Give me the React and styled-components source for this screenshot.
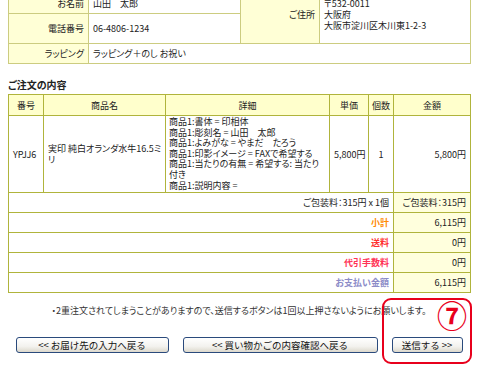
import React from "react";
import styled, { createGlobalStyle } from "styled-components";

const GlobalStyle = createGlobalStyle`
  html, body { margin: 0; padding: 0; background: #fff; }
  body {
    font-family: "Noto Sans CJK JP", "Noto Sans", sans-serif;
    font-size: 9px;
    color: #222;
    font-feature-settings: "palt";
  }
`;

const Page = styled.div`
  position: relative;
  width: 481px;
  height: 373px;
  overflow: hidden;
  padding-left: 8px;
  box-sizing: border-box;
`;

const InfoTable = styled.table`
  width: 462px;
  margin-top: -15px;
  border-collapse: collapse;
  table-layout: fixed;
  & td {
    border: 1px solid #cccc80;
    padding: 0 4px;
    line-height: 11px;
    white-space: nowrap;
  }
`;

const InfoRow = styled.tr`
  height: ${(p) => p.$h}px;
`;

const InfoLabel = styled.td`
  background: #ffffd6;
  text-align: right;
  vertical-align: ${(p) => p.$valign || "middle"};
  padding-bottom: ${(p) => p.$pb || 0}px !important;
`;

const InfoValue = styled.td`
  background: #fff;
  text-align: left;
  vertical-align: ${(p) => p.$valign || "middle"};
  padding-bottom: ${(p) => p.$pb || 0}px !important;
`;

const Heading = styled.h3`
  margin: 14px 0 2px;
  font-size: 10px;
  line-height: 14px;
  font-weight: bold;
  color: #222;
`;

const OrderTable = styled.table`
  width: 462px;
  border-collapse: collapse;
  table-layout: fixed;
  & th, & td {
    border: 1px solid #b0b43c;
    padding: 0 4px;
    line-height: 11px;
  }
`;

const HeadCell = styled.th`
  background: #ffffcc;
  font-weight: normal;
  text-align: center;
  white-space: nowrap;
  height: 20px;
  padding: 0 !important;
`;

const Cell = styled.td`
  text-align: ${(p) => p.$align || "left"};
  vertical-align: ${(p) => p.$valign || "middle"};
  white-space: nowrap;
`;

const DetailCell = styled.td`
  vertical-align: top;
  white-space: nowrap;
  padding: 1px 3px 0 !important;
  line-height: 10.6px !important;
`;

const SumRow = styled.tr`
  height: 20px;
`;

const SumLabel = styled.td`
  text-align: right;
  font-weight: ${(p) => (p.$color ? "bold" : "normal")};
  color: ${(p) => p.$color || "#222"};
  white-space: nowrap;
`;

const SumValue = styled.td`
  background: #ffffdd;
  text-align: right;
  white-space: nowrap;
`;

const Note = styled.p`
  width: 462px;
  margin: 11px 0 0;
  text-align: center;
  line-height: 14px;
  color: #333;
`;

const ButtonRow = styled.div`
  width: 462px;
  margin-top: 19px;
  display: flex;
  justify-content: center;
  gap: 14px;
`;

const XpButton = styled.button`
  width: ${(p) => p.$w}px;
  height: 16px;
  padding: 0;
  border: 1px solid #2a4a7c;
  border-radius: 3px;
  background: linear-gradient(#ffffff, #f3f2ee 60%, #dcd8cc);
  font-family: "Noto Sans CJK JP", "Noto Sans", sans-serif;
  font-size: 9.5px;
  font-feature-settings: normal;
  color: #111;
  line-height: 14px;
  white-space: nowrap;
`;

const Callout = styled.div`
  position: absolute;
  left: 382px;
  top: 298px;
  width: 90px;
  height: 66px;
  box-sizing: border-box;
  border: 2px solid #e8001c;
  border-radius: 9px;
`;

const CalloutNum = styled.span`
  position: absolute;
  left: 53px;
  top: -2px;
  font-size: 30px;
  line-height: 32px;
  font-weight: bold;
  color: #e8001c;
  font-feature-settings: normal;
`;

const details = [
  "商品1:書体 = 印相体",
  "商品1:彫刻名 = 山田　太郎",
  "商品1:よみがな = やまだ　たろう",
  "商品1:印影イメージ = FAXで希望する",
  "商品1:当たりの有無 = 希望する: 当たり",
  "付き",
  "商品1:説明内容 =",
];

const sums = [
  { label: "ご包装料：315円 x 1個", value: "ご包装料：315円" },
  { label: "小計", value: "6,115円", color: "#ff8a00" },
  { label: "送料", value: "0円", color: "#ff3030" },
  { label: "代引手数料", value: "0円", color: "#ff3355" },
  { label: "お支払い金額", value: "6,115円", color: "#8c8cc8" },
];

export default function App() {
  return (
    <>
      <GlobalStyle />
      <Page>
        <InfoTable>
          <colgroup>
            <col style={{ width: 80 }} />
            <col style={{ width: 152 }} />
            <col style={{ width: 79 }} />
            <col style={{ width: 151 }} />
          </colgroup>
          <tbody>
            <InfoRow $h={28}>
              <InfoLabel $valign="bottom" $pb={4}>お名前</InfoLabel>
              <InfoValue $valign="bottom" $pb={4}>山田　太郎</InfoValue>
              <InfoLabel rowSpan={2}>ご住所</InfoLabel>
              <InfoValue rowSpan={2}>
                〒532-0011
                <br />
                大阪府
                <br />
                大阪市淀川区木川東1-2-3
              </InfoValue>
            </InfoRow>
            <InfoRow $h={30}>
              <InfoLabel>電話番号</InfoLabel>
              <InfoValue>06-4806-1234</InfoValue>
            </InfoRow>
            <InfoRow $h={20}>
              <InfoLabel>ラッピング</InfoLabel>
              <InfoValue colSpan={3}>ラッピング＋のし お祝い</InfoValue>
            </InfoRow>
          </tbody>
        </InfoTable>

        <Heading>ご注文の内容</Heading>

        <OrderTable>
          <colgroup>
            <col style={{ width: 35 }} />
            <col style={{ width: 122 }} />
            <col style={{ width: 164 }} />
            <col style={{ width: 39 }} />
            <col style={{ width: 25 }} />
            <col style={{ width: 77 }} />
          </colgroup>
          <thead>
            <tr>
              <HeadCell>番号</HeadCell>
              <HeadCell>商品名</HeadCell>
              <HeadCell>詳細</HeadCell>
              <HeadCell>単価</HeadCell>
              <HeadCell>個数</HeadCell>
              <HeadCell>金額</HeadCell>
            </tr>
          </thead>
          <tbody>
            <tr style={{ height: 77 }}>
              <Cell>YPJJ6</Cell>
              <Cell>
                実印 純白オランダ水牛16.5ミ
                <br />
                リ
              </Cell>
              <DetailCell>
                {details.map((d, i) => (
                  <div key={i}>{d}</div>
                ))}
              </DetailCell>
              <Cell>5,800円</Cell>
              <Cell $align="center">1</Cell>
              <Cell $align="right">5,800円</Cell>
            </tr>
            {sums.map((s) => (
              <SumRow key={s.label}>
                <SumLabel colSpan={5} $color={s.color}>{s.label}</SumLabel>
                <SumValue>{s.value}</SumValue>
              </SumRow>
            ))}
          </tbody>
        </OrderTable>

        <Note>・2重注文されてしまうことがありますので、送信するボタンは1回以上押さないようにお願いします。</Note>

        <ButtonRow>
          <XpButton $w={153}>&lt;&lt; お届け先の入力へ戻る</XpButton>
          <XpButton $w={195}>&lt;&lt; 買い物かごの内容確認へ戻る</XpButton>
          <XpButton $w={71}>送信する &gt;&gt;</XpButton>
        </ButtonRow>

        <Callout>
          <CalloutNum>⑦</CalloutNum>
        </Callout>
      </Page>
    </>
  );
}
